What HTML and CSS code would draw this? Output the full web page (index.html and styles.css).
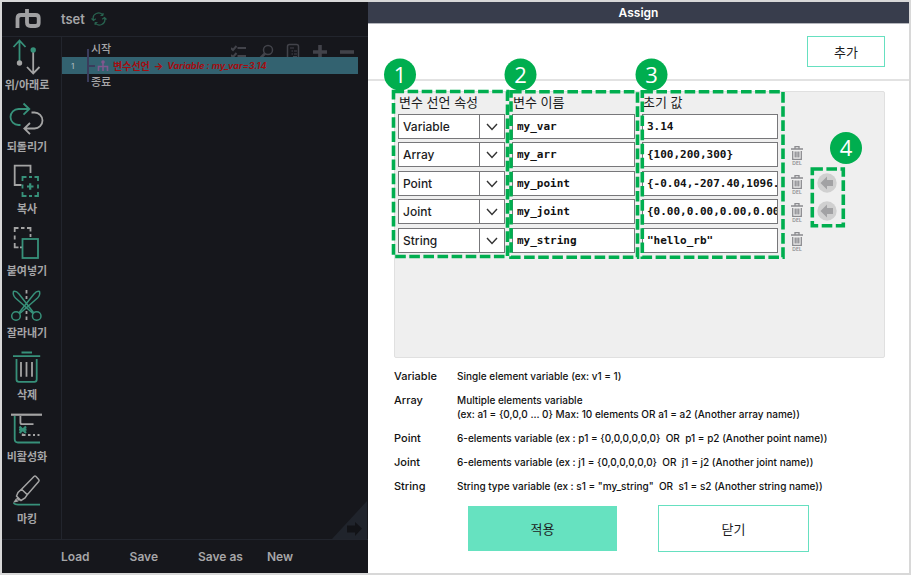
FILE: index.html
```html
<!DOCTYPE html>
<html lang="ko">
<head>
<meta charset="utf-8">
<title>Assign</title>
<link rel="stylesheet" href="styles.css">
</head>
<body>
<div class="app">
  <section class="program">
    <header class="program-head">
      <svg class="logo" width="28" height="20" viewBox="0 0 28 20" role="img" aria-label="rb"><path d="M3.500 19V9.500Q3.500 6 7 6H14M13 0V13.500Q13 17 16.500 17H21.500Q24.700 17 24.700 14V9Q24.700 6 21.500 6H14" fill="none" stroke="currentColor" stroke-width="3.800"/></svg>
      <h1 class="program-name">tset</h1>
      <svg class="sync" width="16" height="14" viewBox="0 0 16 14" fill="none" stroke="currentColor" stroke-width="1.200"><path d="M2.500 8A5.300 5.300 0 0 1 12 3.500M13.500 6A5.300 5.300 0 0 1 4 10.500M.5 6.500 2.500 8.500 4.800 6.700M11.200 7.300 13.500 5.500 15.500 7.500M4 10.500 4.200 13M4 10.500 6.500 10.500M12 3.500 9.500 3.500M12 3.500 12 1"/></svg>
    </header>
    <div class="program-main">
      <nav class="tools">
        <button class="tool" type="button"><svg viewBox="0 0 40 40"><path class="g" d="M12.500 25V3.500M6.500 10 12.500 3.500 18.500 10"/><circle class="wf" cx="12.500" cy="26" r="2.700"/><path class="w" d="M26.200 14V36.500M20 30 26.200 36.500 32.500 30"/><circle class="gf" cx="26.200" cy="13" r="2.700"/></svg><span>위/아래로</span></button>
        <button class="tool" type="button"><svg viewBox="0 0 40 40"><path class="g" d="M13.500 26H11.500A8 8 0 0 1 11.500 10H22M16.500 4.500 22.300 10 16.500 15.700"/><path class="w" d="M24.500 13.500H27.500A8 8 0 0 1 27.500 29.500H17.500M23 24 17.300 29.500 23 35.200"/></svg><span>되돌리기</span></button>
        <button class="tool" type="button"><svg viewBox="0 0 40 40"><path class="w" d="M14.500 24H7.700V4.700H23.500V12"/><path class="g" d="M15.500 20V16H19.500M22 16H25M27.500 16H31V20M31 23.500V27.500M31 31V35H27.500M25 35H22M19.500 35H15.500V31M15.500 27.500V23.500"/><path class="g plus" d="M20 25.500H26.500M23.200 22.200V28.800"/></svg><span>복사</span></button>
        <button class="tool" type="button"><svg viewBox="0 0 40 40"><path class="w" d="M7.700 9V5H11.500M14 5H17.500M20 5H23.500V8.500M23.500 11V14M7.700 12.500V16.500M7.700 20V24.300H11.500M13 24.300H15"/><rect class="g" x="15.500" y="16" width="15.500" height="19"/></svg><span>붙여넣기</span></button>
        <button class="tool" type="button"><svg viewBox="0 0 40 40"><path class="w" d="M19.500 5V8.500M19.500 11V14M19.500 26V29M19.500 31.500V35"/><g class="g thin"><circle cx="9" cy="31" r="4.300"/><circle cx="29.700" cy="31" r="4.300"/><path d="M12 27.800 27 9Q30 5.500 32.500 6.500 33.500 10 30.500 13L12.800 28.500M26.700 27.800 12 9Q9 5.500 6.500 6.500 5.500 10 8.500 13L26 28.500"/></g></svg><span>잘라내기</span></button>
        <button class="tool" type="button"><svg viewBox="0 0 40 40"><path class="g" d="M14.500 5.500H25M6 9.200H33.200M9.500 12V32.500Q9.500 34.800 12 34.800H27.300Q29.700 34.800 29.700 32.500V12"/><path class="w" d="M14 15V29.700M19.500 15V29.700M25 15V29.700"/></svg><span>삭제</span></button>
        <button class="tool" type="button"><svg viewBox="0 0 40 40"><path class="g" d="M7.700 7V30Q7.700 33.500 11 33.500H33"/><path class="w" d="M13.400 7V13.500Q13.400 15.200 15 15.200H26.500M15.700 24.500V26H18.500M21 26H23.500M26 26H28M30.500 26H32.500"/><path class="w bar" d="M4 5.700H35"/><path class="g plus" d="M12.500 17.500 19 24M19 17.500 12.500 24M12 20.700H19.500"/></svg><span>비활성화</span></button>
        <button class="tool" type="button"><svg viewBox="0 0 40 40"><path class="w thin" d="M14.500 18.300 27 5.500Q28 4.500 29 5.500L31.700 8.500Q32.500 9.500 31.700 10.500L20.300 23.700ZM14.500 18.300 20.300 23.700 18 27 14 29.500 9.500 25 11 21.500ZM9.700 27 12.500 29.500"/><path class="wf" d="M6 31.700 9 27.500 11.500 30.500Z"/><path class="g" d="M6.500 32Q8 33.700 11 33.700H33"/></svg><span>마킹</span></button>
      </nav>
      <div class="tree">
        <div class="tree-tools">
          <svg viewBox="0 0 16 18"><path d="M0 5 2 7 5.500 3M0 12 2 14 5.500 10M6.500 5H15M6.500 13H15" stroke-width="2"/></svg>
          <svg viewBox="0 0 16 18"><circle cx="10" cy="7" r="4.500" stroke-width="1.500"/><path d="M7 10.500 2 15.500" stroke-width="2.500"/></svg>
          <svg viewBox="0 0 16 18"><rect x="2.500" y="1.500" width="11" height="15" rx="2" stroke-width="1.500"/><path d="M5 5H9M6.500 8H8M9 8H12M6.500 11H8M9 11H12M8 13.500H12" stroke-width="1.200"/></svg>
          <svg viewBox="0 0 16 18"><path d="M1 9H15M8 2V16" stroke-width="3.600"/></svg>
          <svg viewBox="0 0 16 18"><path d="M1 9H15" stroke-width="3.600"/></svg>
        </div>
        <ol class="steps">
          <li class="step">시작</li>
          <li class="step selected"><span class="line-no">1</span><svg class="node" width="12" height="12" viewBox="0 0 12 12"><circle cx="6" cy="2" r="1.800"/><path d="M6 2V11M1.500 11V6.500H10.500V11" fill="none" stroke="currentColor" stroke-width="1.600"/></svg><b>변수선언</b><b>→</b><b class="slant">Variable : my_var=3.14</b></li>
          <li class="step">종료</li>
        </ol>
        <svg class="corner" width="35" height="39" viewBox="0 0 35 39"><path d="M0 39 35 1V39Z" fill="#20242c"/><path d="M15 25.500H23V22L30 28.500 23 36V32.500H15Z" fill="#121317"/></svg>
      </div>
    </div>
    <footer class="files">
      <button type="button">Load</button>
      <button type="button">Save</button>
      <button type="button">Save as</button>
      <button type="button">New</button>
    </footer>
  </section>

  <main class="dialog">
    <h2 class="dialog-title">Assign</h2>
    <div class="dialog-bar"><button class="outline add" type="button">추가</button></div>
    <div class="panel">
      <table class="vars">
        <thead><tr><th class="c-type">변수 선언 속성</th><th class="c-name">변수 이름</th><th class="c-value">초기 값</th><th class="c-del"></th><th class="c-get"></th></tr></thead>
        <tbody>
          <tr><td><div class="pick"><select aria-label="변수 선언 속성 1"><option>Variable</option></select><svg viewBox="0 0 12 8"><path d="M1 1 6 6.500 11 1"/></svg></div></td><td><input aria-label="변수 이름 1" value="my_var"></td><td><input aria-label="초기 값 1" value="3.14"></td><td></td><td></td></tr>
          <tr><td><div class="pick"><select aria-label="변수 선언 속성 2"><option>Array</option></select><svg viewBox="0 0 12 8"><path d="M1 1 6 6.500 11 1"/></svg></div></td><td><input aria-label="변수 이름 2" value="my_arr"></td><td><input aria-label="초기 값 2" value="{100,200,300}"></td><td><button class="del" type="button"><svg viewBox="0 0 12 14"><path d="M4 2.500V.7H8V2.500M0 3H12M1.700 5V13.300H10.300V5M4.200 5.500V11.500M6 5.500V11.500M7.800 5.500V11.500"/></svg><span>DEL</span></button></td><td></td></tr>
          <tr><td><div class="pick"><select aria-label="변수 선언 속성 3"><option>Point</option></select><svg viewBox="0 0 12 8"><path d="M1 1 6 6.500 11 1"/></svg></div></td><td><input aria-label="변수 이름 3" value="my_point"></td><td><input aria-label="초기 값 3" value="{-0.04,-207.40,1096.20}"></td><td><button class="del" type="button"><svg viewBox="0 0 12 14"><path d="M4 2.500V.7H8V2.500M0 3H12M1.700 5V13.300H10.300V5M4.200 5.500V11.500M6 5.500V11.500M7.800 5.500V11.500"/></svg><span>DEL</span></button></td><td><button class="get" type="button" aria-label="가져오기"><svg viewBox="0 0 20 20"><circle cx="10" cy="10" r="9.700" fill="#d0d0d0"/><path d="M3.500 10 10 3.500V7H16V13H10V16.500Z" fill="#a2a2a4"/></svg></button></td></tr>
          <tr><td><div class="pick"><select aria-label="변수 선언 속성 4"><option>Joint</option></select><svg viewBox="0 0 12 8"><path d="M1 1 6 6.500 11 1"/></svg></div></td><td><input aria-label="변수 이름 4" value="my_joint"></td><td><input aria-label="초기 값 4" value="{0.00,0.00,0.00,0.00,0.00,0.00}"></td><td><button class="del" type="button"><svg viewBox="0 0 12 14"><path d="M4 2.500V.7H8V2.500M0 3H12M1.700 5V13.300H10.300V5M4.200 5.500V11.500M6 5.500V11.500M7.800 5.500V11.500"/></svg><span>DEL</span></button></td><td><button class="get" type="button" aria-label="가져오기"><svg viewBox="0 0 20 20"><circle cx="10" cy="10" r="9.700" fill="#d0d0d0"/><path d="M3.500 10 10 3.500V7H16V13H10V16.500Z" fill="#a2a2a4"/></svg></button></td></tr>
          <tr><td><div class="pick"><select aria-label="변수 선언 속성 5"><option>String</option></select><svg viewBox="0 0 12 8"><path d="M1 1 6 6.500 11 1"/></svg></div></td><td><input aria-label="변수 이름 5" value="my_string"></td><td><input aria-label="초기 값 5" value="&quot;hello_rb&quot;"></td><td><button class="del" type="button"><svg viewBox="0 0 12 14"><path d="M4 2.500V.7H8V2.500M0 3H12M1.700 5V13.300H10.300V5M4.200 5.500V11.500M6 5.500V11.500M7.800 5.500V11.500"/></svg><span>DEL</span></button></td><td></td></tr>
        </tbody>
      </table>
      <!-- Numbered callouts over the table columns -->
      <svg class="callouts" width="490" height="200" viewBox="0 0 490 200">
        <g class="zones">
          <rect x="-.5" y=".5" width="114" height="165"/>
          <rect x="117" y=".8" width="126.500" height="165.500"/>
          <rect x="248.300" y=".8" width="140.700" height="165.500"/>
          <rect x="418.300" y="78" width="31" height="56.700"/>
        </g>
        <g class="marks"><circle cx="6" cy="-16.500" r="16"/><circle cx="126.500" cy="-16.500" r="16"/><circle cx="257.500" cy="-16.500" r="16"/><circle cx="452" cy="57" r="16"/></g>
        <g class="nums"><text x="6" y="-8.500">1</text><text x="126.500" y="-8.500">2</text><text x="257.500" y="-8.500">3</text><text x="452" y="65">4</text></g>
      </svg>
    </div>
    <dl class="help">
      <dt>Variable</dt><dd>Single element variable (ex: v1 = 1)</dd>
      <dt>Array</dt><dd>Multiple elements variable<br>(ex: a1 = {0,0,0 ... 0} Max: 10 elements OR a1 = a2 (Another array name))</dd>
      <dt>Point</dt><dd>6-elements variable (ex : p1 = {0,0,0,0,0,0}&nbsp; OR&nbsp; p1 = p2 (Another point name))</dd>
      <dt>Joint</dt><dd>6-elements variable (ex : j1 = {0,0,0,0,0,0}&nbsp; OR&nbsp; j1 = j2 (Another joint name))</dd>
      <dt>String</dt><dd>String type variable (ex : s1 = "my_string"&nbsp; OR&nbsp; s1 = s2 (Another string name))</dd>
    </dl>
    <div class="actions">
      <button class="apply" type="button">적용</button>
      <button class="outline close" type="button">닫기</button>
    </div>
  </main>
</div>
</body>
</html>
```
FILE: styles.css
```css
* { box-sizing: border-box; }

body {
  margin: 0;
  background: #d8d8d8;
  font-family: Inter, "Noto Sans CJK KR", sans-serif;
  color: #1c1c1e;
}

button, input, select { font: inherit; color: inherit; margin: 0; padding: 0; border: 0; background: none; }

.app {
  display: grid;
  grid-template-columns: 366fr 541fr;
  min-height: 100vh;
  padding: 2px;
}

/* Program pane */
.program {
  display: flex;
  flex-direction: column;
  background: #16171c;
  color: #a6a6a8;
}
.program-head {
  display: flex;
  align-items: center;
  height: 35px;
  padding-left: 12px;
  border-bottom: 1px solid #22252d;
}
.logo { color: #a0a0a2; }
.program-name { margin: 0 6px 0 19px; font-size: 13px; line-height: 16px; font-weight: 600; }
.sync { color: #28624f; }

.program-main { display: flex; flex: 1; }
.tools {
  display: flex;
  flex-direction: column;
  width: 60px;
  padding-right: 9px;
  border-right: 1px solid #22252d;
}
.tool { display: flex; flex-direction: column; align-items: center; height: 62px; font-size: 11px; line-height: 16px; font-weight: 600; white-space: nowrap; }
.tool svg { width: 40px; height: 40px; flex: none; }
.tool .g { fill: none; stroke: #37917a; stroke-width: 1.8; }
.tool .w { fill: none; stroke: #a4a4a4; stroke-width: 1.8; }
.tool .gf { fill: #37917a; }
.tool .wf { fill: #a4a4a4; }
.tool .thin { stroke-width: 1.5; }
.tool .plus, .tool .bar { stroke-width: 2.2; }

.tree { position: relative; flex: 1; padding: 4px 10px 0 0; }
.tree-tools { position: absolute; top: 6px; right: 13px; display: flex; gap: 11px; color: #42434a; }
.tree-tools svg { width: 16px; height: 18px; fill: none; stroke: currentColor; }
.steps { position: relative; margin: 0; padding: 0; list-style: none; font-size: 11px; line-height: 16px; font-weight: 500; }
.steps::before { content: ""; position: absolute; z-index: 1; left: 25px; top: 8px; bottom: 8px; width: 2px; background: #3a3c5c; }
.step { display: flex; align-items: center; height: 16px; padding-left: 29px; }
.selected { position: relative; height: 17px; padding-left: 0; background: #336270; color: #a30d10; font-size: 10px; gap: 4px; white-space: nowrap; }
.selected::before { content: ""; position: absolute; left: 27px; top: 8px; width: 6px; height: 2px; background: #3a3c5c; }
.line-no { width: 31px; padding-left: 9px; color: #a6b4ba; font-size: 8px; }
.node { color: #80588f; fill: currentColor; }
.slant { font-size: 9px; font-style: italic; }
.corner { position: absolute; right: 1px; bottom: 0; }

.files { display: flex; align-items: center; gap: 40px; height: 34px; padding-left: 59px; border-top: 1px solid #22252d; font-size: 12px; font-weight: 600; }
.files button:last-child { margin-left: -16px; }

/* Assign dialog */
.dialog { background: #fff; min-width: 0; }
.dialog-title { margin: 0; height: 22px; border-bottom: 1px solid #b4b6bc; background: #383d4c; color: #fff; font-size: 12px; line-height: 21px; font-weight: 600; text-align: center; }
.dialog-bar { display: flex; justify-content: flex-end; align-items: center; height: 57px; padding-right: 24px; border-bottom: 2px solid #e2e2e2; }
.outline { border: 1px solid #66e0c0; background: #fff; font-size: 13px; }
.add { width: 78px; height: 31px; }

.panel { position: relative; height: 267px; margin: 10px 24px 0 26px; border: 1px solid #e0e0e0; border-radius: 2px; background: #efefef; }
.vars { border-collapse: collapse; table-layout: fixed; width: 450px; margin-left: 3px; }
.vars th { height: 22px; padding: 0 0 2px 1px; font-size: 13px; line-height: 20px; font-weight: 400; text-align: left; white-space: nowrap; }
.vars td { height: 28px; padding: 0 7px 3px 0; vertical-align: top; }
.vars tbody tr:nth-child(even) td { height: 29px; }
.c-type { width: 114px; }
.c-name { width: 130px; }
.c-value { width: 143px; }
.c-del { width: 32px; }
.vars input { display: block; width: 100%; height: 25px; padding: 0 0 0 4px; border: 1px solid #77777a; background: #fff; font-family: "DejaVu Sans Mono", monospace; font-size: 11px; font-weight: 700; color: #111; }
.pick { position: relative; }
.pick select { display: block; width: 100%; height: 25px; padding-left: 4px; border: 1px solid #77777a; border-radius: 0; background: linear-gradient(#77777a, #77777a) right 24px top / 1px 100% no-repeat #fff; appearance: none; font-size: 12px; font-weight: 500; }
.pick svg { position: absolute; right: 7px; top: 9px; width: 12px; height: 8px; fill: none; stroke: #333; stroke-width: 1.4; pointer-events: none; }
.del { display: flex; flex-direction: column; align-items: center; width: 24px; padding-top: 4px; color: #8b8b8f; font-size: 5px; line-height: 6px; font-weight: 600; }
.del svg { width: 12px; height: 14px; fill: none; stroke: currentColor; stroke-width: 1.3; }
.get { display: block; height: 25px; padding-bottom: 1px; }
.get svg { display: block; width: 20px; height: 20px; }

.callouts { position: absolute; left: -1px; top: -1px; overflow: visible; pointer-events: none; }
.zones { fill: none; stroke: #00ae4f; stroke-width: 3.6; stroke-dasharray: 10.6 3.5; }
.marks { fill: #00ae4f; }
.nums { fill: #fff; font-family: "Open Sans", sans-serif; font-size: 22px; text-anchor: middle; }

.help { display: grid; grid-template-columns: 63px 1fr; row-gap: 10px; margin: 11px 24px 0 26px; font-size: 11px; line-height: 14px; font-weight: 500; color: #111; }
.help dd { margin: 0; font-size: 10px; white-space: nowrap; }

.actions { display: flex; align-items: center; justify-content: center; gap: 41px; margin-top: 12px; }
.apply { width: 149px; height: 45px; background: #66e2c0; font-size: 13px; }
.close { width: 151px; height: 47px; }
```
